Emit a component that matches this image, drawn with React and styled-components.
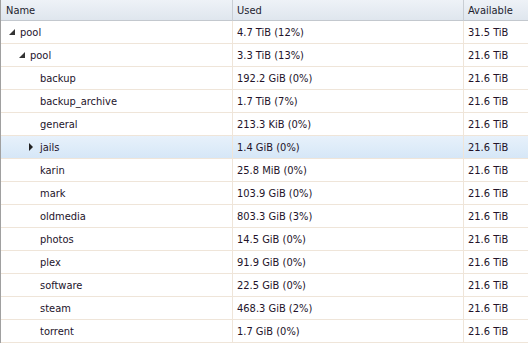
import React from 'react';
import styled, { createGlobalStyle } from 'styled-components';

const Global = createGlobalStyle`
    html, body {
        margin: 0;
        padding: 0;
        background: #fff;
    }
    body {
        font-family: "DejaVu Sans Condensed", "DejaVu Sans", sans-serif;
        font-size: 11px;
        color: #222;
    }
`;

const Grid = styled.div`
    width: 528px;
    height: 343px;
    overflow: hidden;
    border-left: 1px solid #a0a0a0;
    box-sizing: border-box;
    display: grid;
    grid-template-columns: 232px 231px 1fr;
    grid-auto-rows: 23px;
    grid-template-rows: 21px;
`;

const HeadCell = styled.div`
    display: flex;
    align-items: center;
    padding-left: ${p => p.$pad || 5}px;
    background: linear-gradient(#eef2f7, #dfe6ee);
    border-bottom: 1px solid #c3c8ce;
    border-right: ${p => (p.$last ? 'none' : '1px solid #c9ced4')};
    color: #1d1d2e;
    white-space: nowrap;
`;

const Cell = styled.div`
    display: flex;
    align-items: center;
    padding-left: ${p => p.$indent}px;
    border-bottom: 1px solid #efe5d9;
    border-right: ${p => (p.$last ? 'none' : '1px solid #efe5d9')};
    background: ${p => (p.$selected ? 'linear-gradient(#e7f1fb, #d6e7f7)' : '#fff')};
    color: #23132a;
    white-space: nowrap;
`;

const Toggle = styled.span`
    display: inline-flex;
    width: 9px;
    margin-right: 4px;
    justify-content: center;
`;

const Expanded = () => (
    <svg width="6" height="6" viewBox="0 0 6 6">
        <polygon points="6,0 6,6 0,6" fill="#333" />
    </svg>
);

const Collapsed = () => (
    <svg width="5" height="8" viewBox="0 0 5 8">
        <polygon points="0,0 4,4 0,8" fill="#222" />
    </svg>
);

const rows = [
    { name: 'pool', used: '4.7 TiB (12%)', avail: '31.5 TiB', level: 0, toggle: 'open' },
    { name: 'pool', used: '3.3 TiB (13%)', avail: '21.6 TiB', level: 1, toggle: 'open' },
    { name: 'backup', used: '192.2 GiB (0%)', avail: '21.6 TiB', level: 2 },
    { name: 'backup_archive', used: '1.7 TiB (7%)', avail: '21.6 TiB', level: 2 },
    { name: 'general', used: '213.3 KiB (0%)', avail: '21.6 TiB', level: 2 },
    { name: 'jails', used: '1.4 GiB (0%)', avail: '21.6 TiB', level: 2, toggle: 'closed', selected: true },
    { name: 'karin', used: '25.8 MiB (0%)', avail: '21.6 TiB', level: 2 },
    { name: 'mark', used: '103.9 GiB (0%)', avail: '21.6 TiB', level: 2 },
    { name: 'oldmedia', used: '803.3 GiB (3%)', avail: '21.6 TiB', level: 2 },
    { name: 'photos', used: '14.5 GiB (0%)', avail: '21.6 TiB', level: 2 },
    { name: 'plex', used: '91.9 GiB (0%)', avail: '21.6 TiB', level: 2 },
    { name: 'software', used: '22.5 GiB (0%)', avail: '21.6 TiB', level: 2 },
    { name: 'steam', used: '468.3 GiB (2%)', avail: '21.6 TiB', level: 2 },
    { name: 'torrent', used: '1.7 GiB (0%)', avail: '21.6 TiB', level: 2 },
];

export default function App() {
    return (
        <>
            <Global />
            <Grid>
                <HeadCell>Name</HeadCell>
                <HeadCell $pad={4}>Used</HeadCell>
                <HeadCell $pad={4} $last>Available</HeadCell>
                {rows.map((r, i) => (
                    <React.Fragment key={i}>
                        <Cell $indent={6 + r.level * 10} $selected={r.selected}>
                            <Toggle>
                                {r.toggle === 'open' && <Expanded />}
                                {r.toggle === 'closed' && <Collapsed />}
                            </Toggle>
                            {r.name}
                        </Cell>
                        <Cell $indent={4} $selected={r.selected}>{r.used}</Cell>
                        <Cell $indent={4} $selected={r.selected} $last>{r.avail}</Cell>
                    </React.Fragment>
                ))}
            </Grid>
        </>
    );
}
